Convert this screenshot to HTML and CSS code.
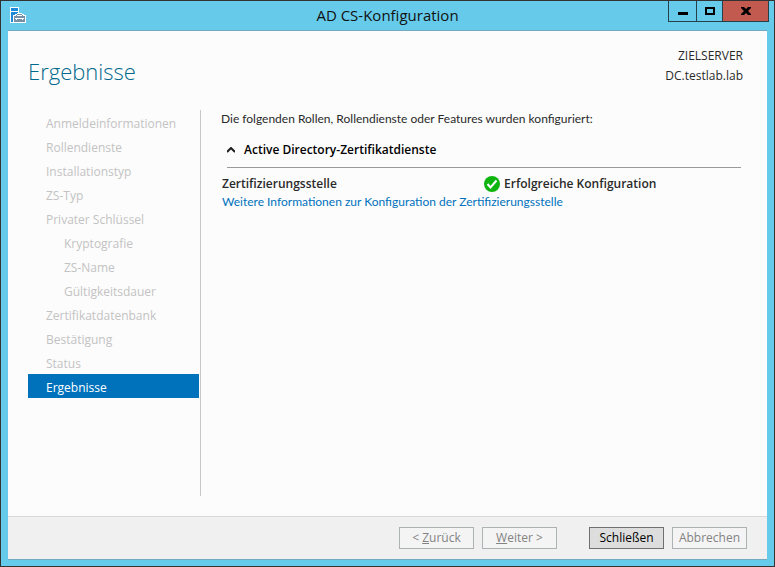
FILE: index.html
```html
<!DOCTYPE html>
<html lang="de">
<head>
    <meta charset="UTF-8">
    <meta name="viewport" content="width=device-width, initial-scale=1.0">
    <title>AD CS-Konfiguration</title>
    <link rel="stylesheet" href="styles.css">
</head>
<body>
    <div class="window">
        <header class="titlebar">
            <svg class="app-icon" width="16" height="16" viewBox="0 0 16 16" shape-rendering="crispEdges" aria-hidden="true">
                <path fill="#fff" d="M0 0h9v6h3v1h2v1h2v8H0z"/>
                <path fill="#1e88d8" d="M1 1h7v3H1zM1 5h7v1H7v1H5v1H3v7H1z"/>
                <path fill="#7890a5" d="M7 7h5v1H7zM6 8h1v1H6zM12 8h1v1h-1zM4 9h11v6H4z"/>
                <path fill="#fff" d="M7 8h5v1H7zM5 11h9v1H5zM6 12h1v1H6zM12 12h1v1h-1z"/>
            </svg>
            <span class="title">AD CS-Konfiguration</span>
            <div class="window-buttons">
                <button type="button" class="win-btn minimize" aria-label="Minimieren">
                    <svg width="10" height="10" viewBox="0 0 10 10" shape-rendering="crispEdges"><path d="M0 6h10v3H0z"/></svg>
                </button>
                <button type="button" class="win-btn maximize" aria-label="Maximieren">
                    <svg width="10" height="10" viewBox="0 0 10 10" shape-rendering="crispEdges"><path fill-rule="evenodd" d="M0 1h10v8H0zM2 3v4h6V3z"/></svg>
                </button>
                <button type="button" class="win-btn close" aria-label="Fenster schließen">
                    <svg width="10" height="10" viewBox="0 0 10 10"><path d="M0 1h3l2 2 2-2h3v1L7 5l3 3v1H7L5 7 3 9H0V8l3-3-3-3z"/></svg>
                </button>
            </div>
        </header>

        <div class="client">
            <div class="page-head">
                <h1>Ergebnisse</h1>
                <div class="server">
                    <div>ZIELSERVER</div>
                    <div>DC.testlab.lab</div>
                </div>
            </div>

            <div class="page-body">
                <nav class="steps">
                    <ul>
                        <li>Anmeldeinformationen</li>
                        <li>Rollendienste</li>
                        <li>Installationstyp</li>
                        <li>ZS-Typ</li>
                        <li>Privater Schlüssel</li>
                        <li class="sub">Kryptografie</li>
                        <li class="sub">ZS-Name</li>
                        <li class="sub">Gültigkeitsdauer</li>
                        <li>Zertifikatdatenbank</li>
                        <li>Bestätigung</li>
                        <li>Status</li>
                        <li class="active" aria-current="step">Ergebnisse</li>
                    </ul>
                </nav>

                <main class="results">
                    <p class="intro">Die folgenden Rollen, Rollendienste oder Features wurden konfiguriert:</p>
                    <button type="button" class="group-head" aria-expanded="true">
                        <svg width="8" height="6" viewBox="0 0 8 6"><path d="M0 5l4-4 4 4" fill="none" stroke="#1e1e1e" stroke-width="2"/></svg>
                        Active Directory-Zertifikatdienste
                    </button>
                    <div class="group">
                        <div class="result-row">
                            <span class="role">Zertifizierungsstelle</span>
                            <span class="state">
                                <svg width="16" height="16" viewBox="0 0 16 16" aria-hidden="true">
                                    <circle cx="8" cy="8" r="8" fill="#0fb40f"/>
                                    <path d="M3.500 8l3 3.500 6-7" fill="none" stroke="#fff" stroke-width="2"/>
                                </svg>
                                Erfolgreiche Konfiguration
                            </span>
                        </div>
                        <a href="#">Weitere Informationen zur Konfiguration der Zertifizierungsstelle</a>
                    </div>
                </main>
            </div>

            <footer class="actions">
                <button type="button" class="btn" disabled>&lt; <u>Z</u>urück</button>
                <button type="button" class="btn" disabled><u>W</u>eiter &gt;</button>
                <button type="button" class="btn primary">Schließen</button>
                <button type="button" class="btn" disabled>Abbrechen</button>
            </footer>
        </div>
    </div>
</body>
</html>
```
FILE: styles.css
```css
* {
    box-sizing: border-box;
}

body {
    margin: 0;
    font-family: "Open Sans", "Noto Sans", sans-serif;
    font-size: 12px;
    line-height: 18px;
    color: #2a2a2a;
}

button {
    font: inherit;
}

.window {
    display: flex;
    flex-direction: column;
    min-height: 100vh;
    padding: 0 7px 6px;
    border: 1px solid #333;
    background-color: #66cbea;
}

/* title bar */

.titlebar {
    display: grid;
    grid-template-columns: 100px 1fr 100px;
    align-items: start;
    height: 29px;
}

.app-icon {
    margin: 6px 2px;
}

.title {
    color: #111;
    font-size: 15px;
    line-height: 28px;
    text-align: center;
}

.window-buttons {
    display: flex;
    justify-content: flex-end;
    margin-right: -2px;
}

.win-btn {
    display: flex;
    align-items: center;
    justify-content: center;
    width: 26px;
    height: 21px;
    padding: 0;
    border: 1px solid #26404a;
    border-top: none;
    border-right: none;
    background-color: #66cbea;
    color: #000;
}

.minimize {
    width: 28px;
}

.close {
    width: 47px;
    border-right: 1px solid #26404a;
    background-color: #c35a50;
}

/* wizard page */

.client {
    display: flex;
    flex: 1;
    flex-direction: column;
    border-top: 1px solid #74aabf;
    border-bottom: 1px solid #74aabf;
    background-color: #fcfcfc;
}

.page-head {
    display: flex;
    justify-content: space-between;
    padding: 15px 24px 0 20px;
}

h1 {
    margin: 7px 0 0;
    color: #00688b;
    font-size: 22px;
    font-weight: 300;
    line-height: 36px;
}

.server {
    line-height: 20px;
    text-align: right;
}

.page-body {
    display: flex;
    flex: 1;
    padding: 21px 26px 20px 20px;
}

.steps {
    width: 173px;
    padding-right: 1px;
    border-right: 1px solid #c8c8c8;
}

.steps ul {
    margin: 0;
    padding: 0;
    list-style: none;
}

.steps li {
    padding: 4px 0 0 18px;
    color: #c3c3c3;
    line-height: 20px;
}

.steps .sub {
    padding-left: 36px;
}

.steps .active {
    background-color: #0072bc;
    color: #fff;
}

.results {
    flex: 1;
    padding-left: 20px;
}

.intro {
    margin: 0 0 13px;
}

.intro,
.group a {
    font-family: Lato, "Open Sans", sans-serif;
}

.group-head {
    display: flex;
    align-items: center;
    gap: 9px;
    padding: 0 6px;
    border: none;
    background: none;
    color: #000;
    font-weight: 600;
}

.group {
    margin: 8px 0 0 6px;
    border-top: 1px solid #999;
}

.result-row {
    display: grid;
    grid-template-columns: 262px 1fr;
    margin: 7px 0 0 -5px;
    font-weight: 600;
}

.state {
    display: flex;
    align-items: center;
    gap: 4px;
}

.group a {
    margin-left: -5px;
    color: #0072bc;
    text-decoration: none;
}

/* buttons */

.actions {
    display: flex;
    justify-content: flex-end;
    gap: 8px;
    padding: 10px 20px;
    border-top: 1px solid #d9d9d9;
    background-color: #f0f0f0;
}

.btn {
    width: 75px;
    height: 22px;
    padding: 0;
    border: 1px solid #adb2b5;
    background-color: #f4f4f4;
    color: #838383;
    line-height: 20px;
}

.primary {
    margin-left: 24px;
    border-color: #707070;
    background-color: #ddd;
    color: #000;
}
```
